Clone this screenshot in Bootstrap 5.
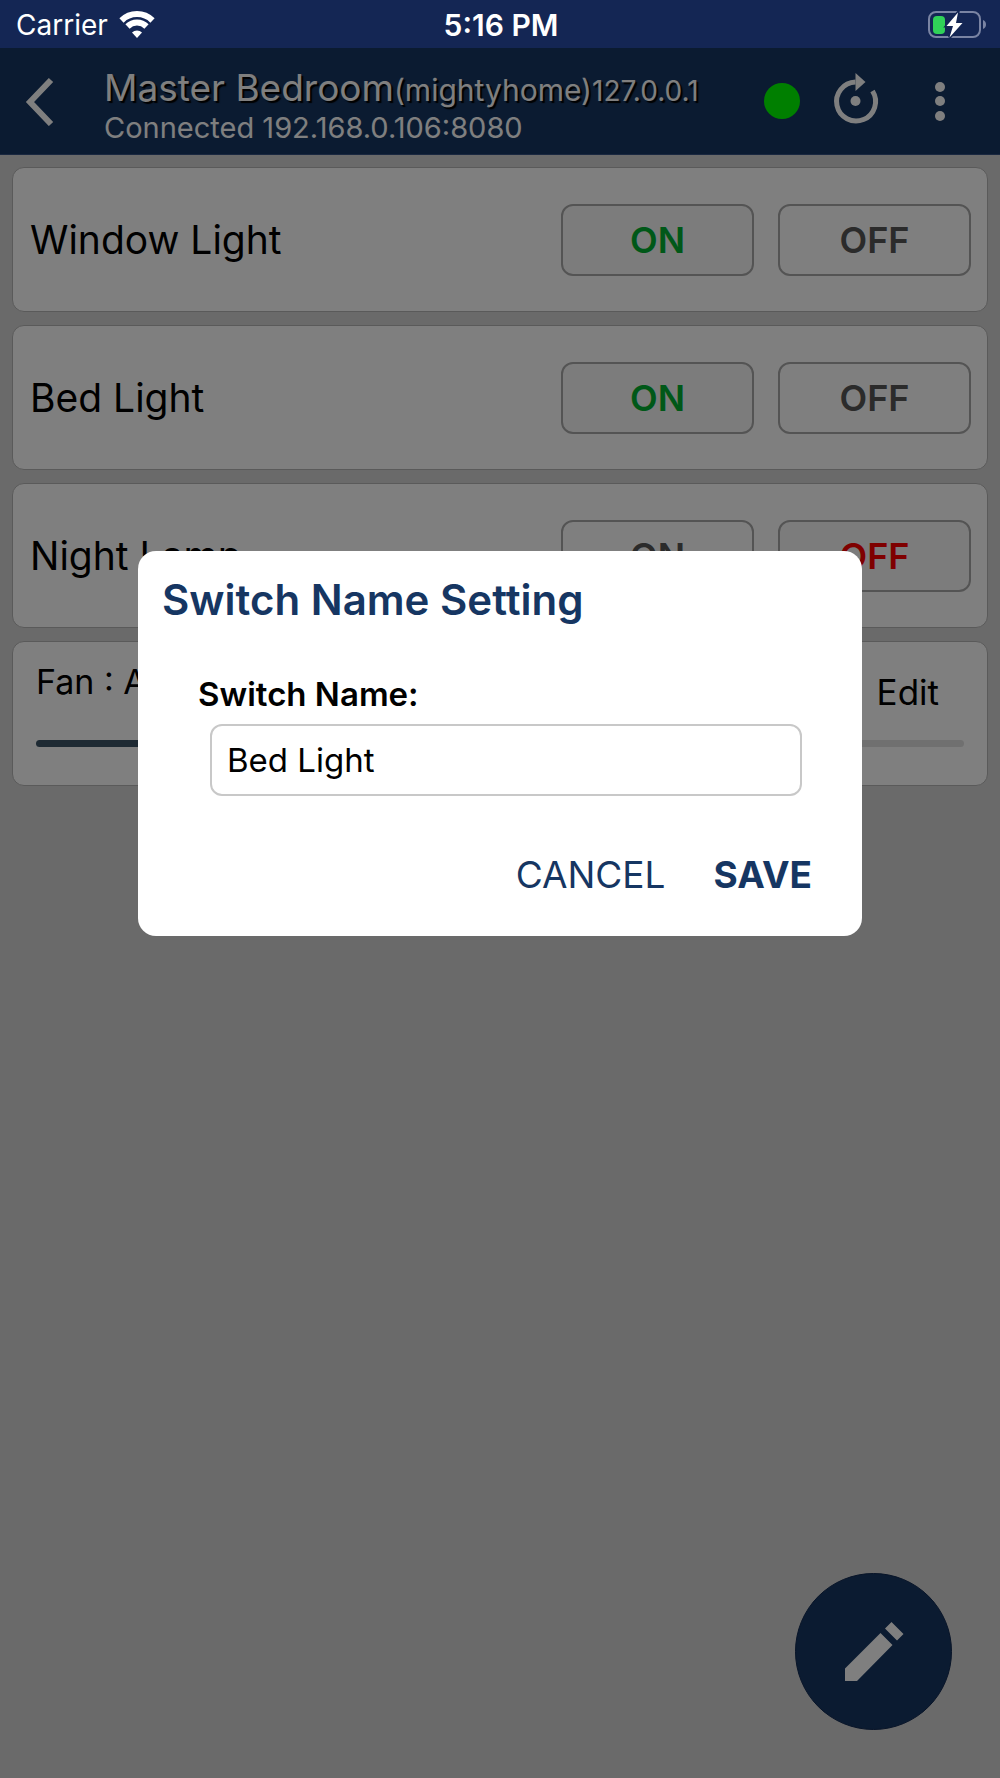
<!DOCTYPE html>
<html lang="en">
<head>
<meta charset="utf-8">
<meta name="viewport" content="width=device-width, initial-scale=1">
<title>Master Bedroom</title>
<link href="https://cdn.jsdelivr.net/npm/bootstrap@5.3.0/dist/css/bootstrap.min.css" rel="stylesheet">
<style>
  body { font-family: Inter, "Liberation Sans", sans-serif; color: #000; background: #d4d4d4; }
  .status-bar { height: 48px; padding: 2px 14px 0 16px; background: #142654; color: #fff; font-size: 28px; line-height: 46px; }
  .clock { font-size: 30px; }
  .app-bar { min-height: 107px; padding: 0 24px 0 20px; background: #163662; color: #fff; border-bottom: 1px solid #345080; }
  .icon-btn { padding: 0; border: 0; background: none; color: inherit; line-height: 0; }
  .back-btn { width: 64px; text-align: left; }
  .room { padding-top: 11px; }
  .room-title { font-size: 37px; line-height: 40px; margin: 0; font-weight: 400; text-shadow: 2px 2px 1px #000; white-space: nowrap; }
  .room-user { font-size: 30px; }
  .room-ip { font-size: 28px; }
  .room-status { font-size: 29px; line-height: 34px; margin: 0; }
  .online-dot { width: 36px; height: 36px; background: #0f0; }
  .device-list { padding: 12px; gap: 13px; }
  .device { height: 145px; border: 1px solid #b4b4b4; border-radius: 12px; padding: 0 16px 0 17px; }
  .device-name { font-size: 39px; line-height: 48px; }
  .switch-btn { width: 193px; height: 72px; border: 2px solid #a8a8a8; border-radius: 12px; font-size: 36px; font-weight: 600; line-height: 48px; color: #565656; background: #fff; }
  .switch-on { color: #00b030; background: #f8f8f8; }
  .switch-off { color: #f00; background: #f8f8f8; }
  .fan { padding: 16px 23px; }
  .fan-label { font-size: 34px; line-height: 48px; }
  .fan-edit { padding: 10px 25px 0 0; border: 0; background: none; font-size: 35px; line-height: 48px; color: #000; }
  .fan-speed { appearance: none; height: 7px; border-radius: 4px; margin: 24px 0 0; background: linear-gradient(to right, #3c5466 50%, #e0e0e0 50%); }
  .fan-speed::-webkit-slider-thumb { appearance: none; width: 30px; height: 30px; border-radius: 50%; background: #3c5466; }
  .fab { right: 48px; bottom: 48px; width: 157px; height: 157px; border: 1px solid #102850; border-radius: 50%; background: #163662; color: #fff; }
  .scrim { background: rgba(0, 0, 0, .5); padding: 503px 16px 16px; z-index: 10; }
  .dialog { max-width: 724px; padding: 25px 24px; border-radius: 18px; }
  .dialog-title { font-size: 42px; line-height: 48px; font-weight: 600; color: #163662; margin: 0 0 50px; }
  .dialog-body { padding: 0 36px; }
  .dialog-label { font-size: 33px; line-height: 40px; font-weight: 600; margin-bottom: 10px; }
  .name-input { width: auto; height: 72px; border: 2px solid #c8c8c8; border-radius: 12px; padding: 0 15px; font-size: 33px; color: #000; }
  .name-field { padding-left: 12px; }
  .dialog-actions { gap: 48px; margin: 55px 26px 12px; }
  .dialog-btn { padding: 0; border: 0; background: none; font-size: 37px; line-height: 48px; color: #163662; }
</style>
</head>
<body class="d-flex flex-column min-vh-100">

<div class="status-bar d-flex align-items-center">
  <div class="col d-flex align-items-center gap-2">
    <span>Carrier</span>
    <svg width="44" height="36" viewBox="0 0 44 36" fill="none" aria-hidden="true">
      <path d="M5.500 13.500A22 22 0 0 1 36.500 13.500" stroke="#fff" stroke-width="6"/>
      <path d="M11.500 19.500A13.500 13.500 0 0 1 30.500 19.500" stroke="#fff" stroke-width="6"/>
      <path d="M21 31l-5-5.500a7.500 7.500 0 0 1 10 0z" fill="#fff"/>
    </svg>
  </div>
  <div class="clock fw-semibold">5:16 PM</div>
  <div class="col d-flex justify-content-end">
    <svg width="58" height="30" viewBox="0 0 58 30" fill="none" aria-hidden="true">
      <rect x="1" y="2" width="51" height="25" rx="7" stroke="#7a84a3" stroke-width="2"/>
      <rect x="5" y="6" width="12" height="18" rx="4" fill="#30d158"/>
      <path d="M55 10v9c4-1.500 4-7.500 0-9z" fill="#7a84a3"/>
      <path d="M30 2.500L18.500 16H25l-3.500 11.500L34.500 13H28z" fill="#fff" stroke="#142654" stroke-width="3" paint-order="stroke"/>
    </svg>
  </div>
</div>

<div class="position-relative flex-grow-1">
  <header class="app-bar d-flex align-items-center">
    <button class="icon-btn back-btn ms-1" aria-label="Back">
      <svg width="32" height="50" viewBox="0 0 32 50" fill="none"><path d="M27 4L6 26l21 22" stroke="currentColor" stroke-width="6"/></svg>
    </button>
    <div class="room flex-grow-1 ms-3">
      <h1 class="room-title">Master Bedroom<span class="room-user">(mightyhome)</span><span class="room-ip">127.0.0.1</span></h1>
      <p class="room-status">Connected 192.168.0.106:8080</p>
    </div>
    <div class="online-dot rounded-circle flex-shrink-0"></div>
    <button class="icon-btn ms-4" aria-label="Refresh">
      <svg width="64" height="56" viewBox="0 0 64 56" fill="none">
        <path d="M31.500 9A19.500 19.500 0 1 0 48.500 18" stroke="currentColor" stroke-width="5"/>
        <path d="M31.500 0v18l10-9z" fill="currentColor"/><circle cx="31.500" cy="28" r="5" fill="currentColor"/>
      </svg>
    </button>
    <button class="icon-btn ms-4" aria-label="More options">
      <svg width="64" height="56" viewBox="0 0 64 56" fill="currentColor"><circle cx="28" cy="14" r="5"/><circle cx="28" cy="28" r="5"/><circle cx="28" cy="43" r="5"/></svg>
    </button>
  </header>

  <main class="device-list d-flex flex-column">
    <section class="device bg-white d-flex align-items-center">
      <span class="device-name flex-grow-1">Window Light</span>
      <div class="d-flex gap-4"><button class="switch-btn switch-on">ON</button><button class="switch-btn">OFF</button></div>
    </section>
    <section class="device bg-white d-flex align-items-center">
      <span class="device-name flex-grow-1">Bed Light</span>
      <div class="d-flex gap-4"><button class="switch-btn switch-on">ON</button><button class="switch-btn">OFF</button></div>
    </section>
    <section class="device bg-white d-flex align-items-center">
      <span class="device-name flex-grow-1">Night Lamp</span>
      <div class="d-flex gap-4"><button class="switch-btn">ON</button><button class="switch-btn switch-off">OFF</button></div>
    </section>
    <section class="device fan bg-white d-flex flex-column">
      <div class="d-flex justify-content-between align-items-start">
        <label class="fan-label" for="fanSpeed">Fan : A</label>
        <button class="fan-edit">Edit</button>
      </div>
      <input class="fan-speed w-100" id="fanSpeed" type="range" min="0" max="100" value="50">
    </section>
  </main>

  <button class="fab position-absolute d-flex align-items-center justify-content-center" aria-label="Edit devices">
    <svg width="60" height="60" viewBox="0 0 60 60" fill="currentColor"><path d="M1 59V46.500L36.500 11l12 12L13 59zM41 6.500L47.500 0 59.500 12 53 18.500z"/></svg>
  </button>

  <div class="scrim position-absolute top-0 start-0 w-100 h-100">
    <form class="dialog bg-white mx-auto" role="dialog" aria-labelledby="dialogTitle">
      <h2 class="dialog-title" id="dialogTitle">Switch Name Setting</h2>
      <div class="dialog-body">
        <label class="dialog-label d-block" for="switchName">Switch Name:</label>
        <div class="name-field d-flex"><input class="name-input flex-grow-1" id="switchName" type="text" value="Bed Light"></div>
      </div>
      <div class="dialog-actions d-flex justify-content-end">
        <button class="dialog-btn" type="button">CANCEL</button>
        <button class="dialog-btn fw-bold" type="button">SAVE</button>
      </div>
    </form>
  </div>
</div>

<script src="https://cdn.jsdelivr.net/npm/bootstrap@5.3.0/dist/js/bootstrap.bundle.min.js"></script>
</body>
</html>
